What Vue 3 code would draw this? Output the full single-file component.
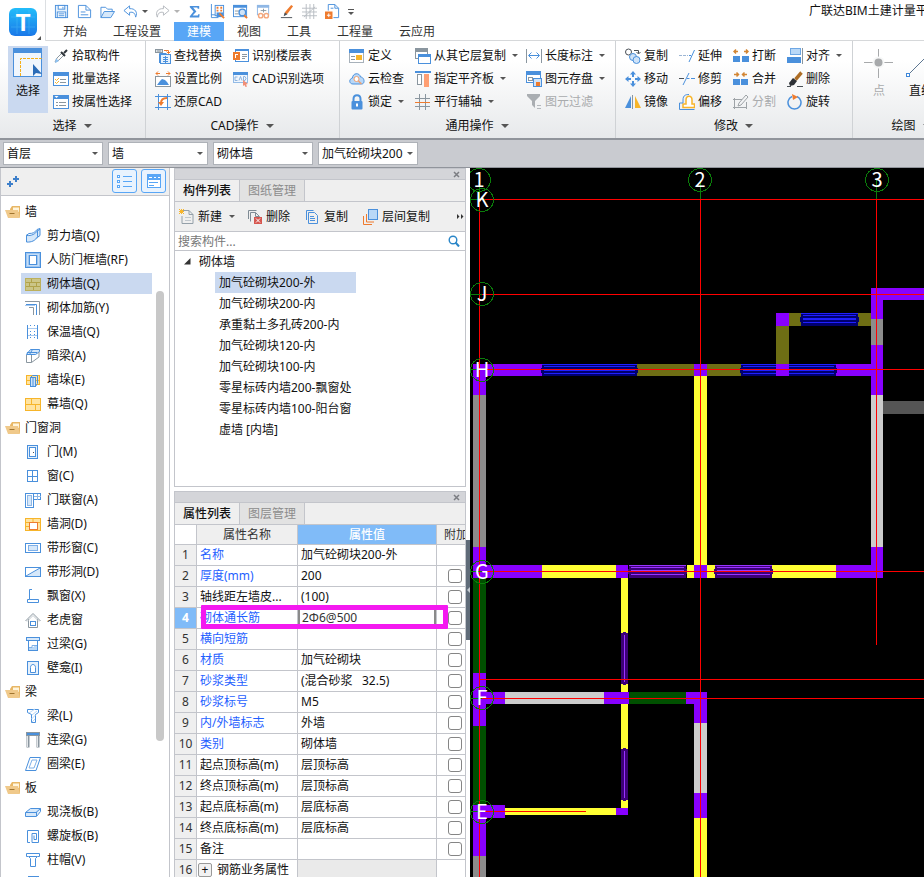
<script setup>
import { ref } from 'vue'

const B = '#4a90dc'
const L = '#d6e8fa'
const O = '#ee7b2e'
const G = '#8a969f'
const Y = '#f7b52a'
const YL = '#ffe3a0'
const K = '#4a5056'

const line = (d, c = B, w = 1) => `<path d="${d}" fill="none" stroke="${c}" stroke-width="${w}"/>`
const fill = (d, c = B) => `<path d="${d}" fill="${c}"/>`
const box = (x, y, w, h, f = 'none', s = B, sw = 1) =>
  `<rect x="${x}" y="${y}" width="${w}" height="${h}" fill="${f}" stroke="${s}" stroke-width="${sw}"/>`

const icons = {
  save: box(1.5, 1.5, 13, 13, '#e6f2fd') + box(4.5, 1.5, 7, 4, '#fff') + box(3.5, 8.5, 9, 6, '#fff') + line('M5 10.5h6M5 12.5h6M9.5 3v2'),
  file: line('M1.5 14.5V1.5h8l5 5v8z') + line('M9.5 1.5v5h5M4 8.5h5M4 11.5h8'),
  open: line('M1 14.500V3.500h5l2 2h5v2.500') + fill('M1 14.500L4.500 8h11l-4 6.500z', L) + line('M1 14.500L4.500 8h11l-4 6.500z'),
  undo: fill('M7 2L1 7l6 5V9c4-1 6 1 6.500 5C16 9 13 4.500 7 5z', '#fff') + line('M7 2L1 7l6 5V9c4-1 6 1 6.500 5C16 9 13 4.500 7 5z'),
  redo: line('M9 2l6 5-6 5V9C5 8 3 10 2.500 14 0 9 3 4.500 9 5z', '#b3b8bd'),
  sum: fill('M3 2h10v3h-1.500L11 3.700H6.500L10 8l-4 4.300h5.500L12 11h1.500l-.5 3.500H3V13l4-5-4-4.500z'),
  calc: line('M1.500 0v14.500H9M1 11.500h6') + box(5.5, 1.5, 9, 11, '#fff') + fill('M7 3h2v2H7zM11 3h2v2h-2zM7 6h2v2H7zM11 6h2v2h-2z', O) + fill('M7 9h7v5H7z') + line('M10 10l5 5', O, 2),
  find: box(.5, 1.5, 14, 12, '#fff') + fill('M0 1h15v3H0z') + line('M2 7.500h5M2 10.500h4', G) + `<circle cx="10" cy="9" r="3.500" fill="#cfe3f8" stroke="${B}" stroke-width="1.500"/>` + line('M12 12l3 3', O, 2),
  view: box(1.5, 1.5, 12, 10, '#fff', '#8fb7e5') + fill('M1 1h13v3H1z', '#8fb7e5') + line('M5 7h6M8 5v4', G) + `<circle cx="5" cy="12.500" r="2.300" fill="#fff" stroke="#f4a77c" stroke-width="1.500"/><circle cx="11" cy="12.500" r="2.300" fill="#fff" stroke="#f4a77c" stroke-width="1.500"/>`,
  brush: fill('M13 1l2 1.500-6 8-3 1 .5-3z', O) + fill('M6 9l3 2-4 2z', K) + line('M2 14.500h12', K),
  net: line('M4.500 0v16M8.500 0v16M12.500 0v16M0 4.500h16M0 8.500h16M0 12.500h16M2 14L14 3', '#b8bdc2'),
  addfile: line('M3.500 7V.5h7l4 4v10H9') + line('M10.500.5v4h4M6 4.500h3') + fill('M0 8h8v8H0z', O) + line('M2 12h4M4 10v4', '#fff'),
  dropper: line('M2 14l2-4 5-5 2 2-5 5-3 2z', '#8c979f') + fill('M3 10.500l3 2.500-4 2z', '#8dc3f5') + line('M8 4l4 4M11 5l3-3', '#30363c', 2),
  batch: box(.5, 1.5, 15, 13, '#fff') + fill('M0 1h16v4H0z') + line('M7 8.500h6M7 11.500h6', G) + line('M2 8l1.500 1.500L6 7M2 11l1.500 1.500L6 10', Y),
  prop: box(.5, 1.5, 15, 13, '#fff') + fill('M0 1h16v4H0z') + fill('M1.500 2h4l-2 2z', '#fff') + line('M6 8.500h7M6 11.500h7M3 8.500h2M3 11.500h2', G),
  replace: box(.5, 1.5, 7, 3, '#dde1e4', G) + line('M3 1v4M5 1v4', G) + line('M9 2.500h4.500v3M11.500 3.500l2 2 2-2', O) + box(5.5, 6.5, 10, 9, '#e6f2fd') + line('M4.500 15V5.500h7M8 9.500h5M8 11.500h5M8 13.500h5M10.500 8v7'),
  scale: line('M1 2.500h4M11 2.500h4M3 .5l-2 2 2 2M13 .5l2 2-2 2', O) + box(.5, 5.5, 15, 10, '#fff', G) + fill('M2 14l3-4 2-2 3 1 2 2 2 3z'),
  restore: line('M3.500 0v16M12.500 0v16M0 2.500h16M0 13.500h16') + fill('M4 3h8v10H4z', '#fff') + line('M6 9c0-3 2-5 6-5', O, 2) + fill('M3 8h6l-3 4z', O),
  floors: box(2.5, 1.5, 13, 12, '#fff') + fill('M2 1h14v2H2z') + line('M9 6.500h5M9 8.500h5M9 10.500h3', G) + box(1, 5, 5, 6, '#fff', O, 2) + fill('M3 7h2v3H3z', O),
  cadopt: box(.5, 1.5, 14, 10, '#f0f6fd', '#94bbe6') + fill('M0 1h15v3H0z') + line('M4.500 6H2v3.500h2.500M6 9.500l1.500-4L9 9.500M10.500 5.500v4h1.500l1-2-1-2z', '#8db3de') + fill('M10 9l5 4-2 .5 1 2-1.500.5-1-2-1.500 1z', '#f18f76'),
  define: box(.5, 1.5, 14, 13, '#fff', '#a7b1ba') + fill('M0 1h15v4H0z') + line('M2 8.500h4M2 11.500h4', G) + fill('M7 7h6v5H7z', Y),
  cloud: `<path d="M4 13c-4 0-4.500-5-.5-6 0-5 7-6 8-1 4 0 5 7 1 7z" fill="#b9d8f7" stroke="${B}"/><circle cx="7.500" cy="8" r="2.500" fill="#fff" stroke="#f0a070"/>` + line('M9.500 10l3 3', '#f0a070', 1.5),
  lock: `<path d="M4.500 7V5c0-5 7-5 7 0v2" fill="none" stroke="${B}" stroke-width="2"/><rect x="2.500" y="7" width="11" height="8.500" rx="1" fill="${B}"/>` + fill('M7 9.500h2v3H7z', '#fff'),
  layers: box(.5, .5, 12, 10, '#fff', G) + fill('M0 0h13v4H0z', G) + box(3.5, 6.5, 12, 9, '#fff') + fill('M3 6h13v3H3z'),
  flush: line('M0 1h16', B, 2) + box(2.5, 3.5, 4, 10, '#fff', G) + fill('M9 3h5v13H9z', '#ff9f73'),
  axis: line('M4.500 0v16M10.500 0v16', G) + line('M0 4.500h15', G) + line('M0 8.500h15', O) + line('M0 12.500h15', G),
  dim: line('M.5 1v14M15.500 1v14', G) + line('M3 7.500h10M5.500 4.500l-3 3 3 3M10.500 4.500l3 3-3 3'),
  store: box(.5, .5, 14, 11, '#fff') + fill('M0 0h15v4H0z') + box(2.5, 6.5, 4, 3, '#fff', G) + box(7.5, 7.5, 8, 8, '#cfe3f8') + fill('M10 11h4v4h-4z', O),
  filter: fill('M1 0h13v2L9 7v7l-3-3V7L1 2z', '#aaaeb2') + line('M11 11.500h4M11 14.500h4', '#b4b8bc'),
  copy: `<circle cx="3.500" cy="4" r="3" fill="#fff" stroke="${K}"/>` + line('M9 2.500h4.500v3M11.500 4l2 2 2-2', K) + `<circle cx="8" cy="9" r="3.500" fill="#cfe3f8" stroke="${B}"/><circle cx="11.500" cy="12" r="3.500" fill="#cfe3f8" stroke="${B}"/>`,
  move: fill('M8 0l3 3.500H5zM8 16l3-3.500H5zM0 8l3.500-3v6zM16 8l-3.500-3v6z') + line('M8 3v3M8 10v3M3 8h3M10 8h3', B, 2),
  mirror: fill('M6 2v12H0z') + fill('M10 2v12h6z', Y) + line('M7.500 1v14', G),
  extend: line('M0 7.500h9', '#9db6d4').replace('/>', ' stroke-dasharray="3 1"/>') + line('M10 14L15.500 2', B) + line('M10 7.500h2', B),
  trim: line('M4 14l6-12', B) + line('M0 7.500h5', K) + line('M8 7.500h8', B) + line('M10.500 7.500h1.500', '#fff'),
  offset: `<path d="M4 13.500V10h3V6c0-5 6-5 6 0v4h2.500v3.500z" fill="#fff" stroke="${Y}" stroke-width="1.500"/>` + line('M15.500 15.500H.5V9H4V6c0-5 3-5.500 6-5.500', B, 1),
  split: fill('M0 8h7v6H0zM9 8h7v6H9z') + line('M1 3.500h4M3 1.500l-2 2 2 2M11 3.500h4M13 1.500l2 2-2 2', '#d38634', 1.5),
  merge: fill('M0 8h7v6H0zM8 8h7v6H8z') + line('M1 3.500h4M3.500 1.500l2 2-2 2M10 3.500h4M11.500 1.500l-2 2 2 2', '#d38634', 1.5),
  cut: line('M0 5.500h9M0 13.500h14M1.500 4v11M13.500 8v7M5 12l1-3 7-8 2 2-7 8z', '#9ea3a7'),
  align: box(3.5, .5, 10, 6, '#b9d8f7', '#6ea7e4') + fill('M0 9h14v6H0z') + line('M15.500 0v16', G),
  erase: line('M8 8l6-7M9 9l6-7', '#ad6d25', 2) + fill('M6 7l4 3-3 4-4 1-1-3z', '#2c3035') + line('M0 15.500h4M10 15.500h6', K),
  rotate: `<path d="M10 2.500a6.500 6.500 0 1 1-5 0" fill="none" stroke="${B}" stroke-width="1.500"/>` + fill('M5 0l6 3-5 3z', O),
  folder: fill('M5 5l2-3h8v11H6z', '#e8b766') + fill('M8 3.500h6V8H8z', '#fff5dd') + fill('M0 6h13l2 8H3z', '#f0c98a') + line('M4.500 9.500h5', '#a0742f'),
  shear: fill('M1 7c5 1 9-1 11-5l3-1v7c-3 4-8 7-14 6z', L) + line('M1.500 7.500c5 .5 9-1.500 11-5v6c-2 4-6 6-11 5.500zM1 7.500l3-2c4 0 6-1 8-4l3-1v7l-3 2M12.500 3L15 1'),
  frame: box(.5, .5, 15, 15, '#9cc5f0', B) + box(2.5, 2.5, 11, 11, '#9cc5f0', '#c5ddf7') + box(4.5, 3.5, 7, 9, '#fff'),
  brick: box(.5, 2.5, 15, 12, '#cbc588', '#bcb05c') + line('M1 6.500h14M1 10.500h14M6.500 3v3M11.500 7v3M4.500 7v3M8.500 11v3', '#b0a24a'),
  rebar: line('M0 1.500h14.500V15', G) + line('M1 4.500h10.500V15', B) + line('M4 7.500h4.500V15', G) + line('M0 5.500h10', '#a8c9ee'),
  insul: line('M2.500 1v14M12.500 1v14') + line('M5.500 1v14M9.500 1v14', B).replace('/>', ' stroke-dasharray="1 2"/>') + line('M3 4.500h9M3 11.500h9', '#a9caef'),
  hidden: fill('M1 5l5-4h9v3l-4 3H1z', L) + line('M1.500 6.500l4-5h9v2l-4 3zM2 4.500h10M7.500 1.500l-3 5', B) + line('M1.500 7v7.500h5V7M6.500 14.500L14 9V4', G),
  pier: box(1.5, 3.5, 13, 9, YL, Y) + line('M1 8.500h14', Y) + box(5.5, 5.5, 5, 9, '#cfe3f8') + line('M5.500 5.500l2-2h5v8l-2 3M8 6v8'),
  curtain: box(.5, 2.5, 15, 12, YL, Y) + line('M0 8.500h16M6.500 3v5M10.500 9v5', Y, 1),
  door: box(2.5, 1.5, 10, 13, '#e6f1fc') + box(4.5, 3.5, 6, 9, '#fff') + line('M8 8.500h1', K),
  window: box(2.5, 2.5, 10, 11, '#fff') + line('M7.500 2v12M2 8.500h11'),
  doorwin: box(.5, 1.5, 8, 14, '#fff') + box(2.5, 3.5, 4, 10, L, '#8fb7e5') + box(8.5, 1.5, 7, 6, '#fff') + line('M12.500 2v6M9 4.500h7', '#8fb7e5'),
  hole: box(.5, 2.5, 15, 12, YL, Y) + line('M0 6.500h5M11 6.500h5M0 10.500h4M8 2v4', Y) + box(4.5, 6.5, 8, 7, '#fff', O),
  strip: box(.5, 3.5, 15, 9, '#fff') + box(3.5, 5.5, 9, 5, L, '#7fb0e8'),
  striphole: box(.5, 3.5, 15, 9, '#fff') + fill('M2 12L15 4v8z', L) + line('M1 12L15 4'),
  bay: line('M7 1.500H4.500v10H2.500v3h11v-3h-9'),
  dormer: line('M.5 9L8 1.500 15.500 9M3.500 7v8.500h9V7', G) + line('M2 9.500L8 3.500l6 6', '#c0c7cd') + box(5.5, 9.5, 5, 4, '#fff'),
  lintel: box(1.5, 1.5, 13, 3, L) + box(3.5, 4.5, 9, 10, '#fff') + fill('M4 14v-2h2v-1h3v-2h3v5z', '#b9d8f7') + line('M4 11.500h3v-2h5', '#7fb0e8'),
  niche: box(2.5, 1.5, 11, 13, '#e6f1fc') + `<path d="M5.500 12.500V7.500c0-4 5-4 5 0v5z" fill="#fff" stroke="${B}"/>`,
  beam: line('M2.500 1.500h11v3l-3 2v8h-4v-8l-4-2z') + line('M4 5l6-4M7 7l5-4M6.500 11l4-4M7 14l3-3', '#b9d8f7'),
  coupling: box(1.5, .5, 13, 3, B, G) + line('M3 3v12.500M13 3v12.500', G, 3) + line('M2.500 4v11M12.500 4v11', '#e3e6e9'),
  ring: line('M5 1.500h10.500L11 14.500H.5z') + line('M7 4h5l-3 8H4z', '#7fb0e8'),
  slab: fill('M1 8l5-4h9v3l-4 5H1z', L) + line('M.5 8.500l5-4h10v3l-4 5H.5zM.5 8.500h10.500l4.500-4M11.500 8v4'),
  spiral: line('M5 14.500H2.500v-12h11v12H7v-9h4.500v6H9v-4'),
  cap: line('M1.500 1.500h13v3h-2l-2 2v8h-5v-8l-2-2h-2zM4 4.500h8'),
  part: line('M4 .5h9v12H4z', B, 2),
  create: line('M4 1.500h6l4 4v9H3V7M10 1.500v4h4', '#94a0a9') + line('M6 8.500h6M6 11.500h6', '#c0c7cd') + line('M0 0l5 5M5 0L0 5M2.500 0v5M0 2.500h5', Y),
  remove: line('M1.500 10V1.500h8M3.500 12.500V3.500h5l4 4', '#7f8b94') + line('M8.500 3.500v4h4', '#7f8b94') + fill('M7 8h8v7H7z', '#d6564f') + line('M9 9.500l4 4M13 9.500l-4 4', '#fff'),
  dup: line('M1.500 11V1.500h7') + line('M3.500 14.500v-11h6l3 3v8zM5 7.500h4M5 9.500h5M5 11.500h5'),
  between: line('M.5 7v8.500H9', O) + line('M3.500 5v8H11', O) + box(5.5, .5, 9, 10, '#b9d8f7'),
  list: line('M6 3.500h9M6 8.500h9M6 13.500h9', '#58a6f6') + box(.5, 2.5, 2, 2, '#fff', '#58a6f6') + box(.5, 7.5, 2, 2, '#fff', '#58a6f6') + box(.5, 12.5, 2, 2, '#fff', '#58a6f6'),
  card: box(1.5, 1.5, 13, 13, '#fff', '#58a6f6') + fill('M1 1h14v6H1z', '#58a6f6') + line('M3 4.500h3M8 4.500h2M12 4.500h2', '#fff') + line('M3 9.500h9M3 12.500h5', '#58a6f6'),
  plus2: line('M0 11h6M3 8v6M6 6h6M9 3v6', '#3d7fca', 2),
}

const quick = [
  ['save'], ['file'], ['open'], ['undo', 'dark'], ['redo', 'pale'], ['sum'], ['calc'],
  ['find'], ['view'], ['brush'], ['net'], ['addfile'],
]

const tabs = ['开始', '工程设置', '建模', '视图', '工具', '工程量', '云应用']
const activeTab = ref('建模')

const t = (icon, label, opts = {}) => ({ icon, label, ...opts })
const groups = [
  { name: '选择', width: 146, big: [{ id: 'select', label: '选择', on: true }], cols: [
    [t('dropper', '拾取构件'), t('batch', '批量选择'), t('prop', '按属性选择')]] },
  { name: 'CAD操作', width: 194, cols: [
    [t('replace', '查找替换'), t('scale', '设置比例'), t('restore', '还原CAD')],
    [t('floors', '识别楼层表'), t('cadopt', 'CAD识别选项')]] },
  { name: '通用操作', width: 276, cols: [
    [t('define', '定义'), t('cloud', '云检查'), t('lock', '锁定', { menu: true })],
    [t('layers', '从其它层复制', { menu: true }), t('flush', '指定平齐板', { menu: true }), t('axis', '平行辅轴', { menu: true })],
    [t('dim', '长度标注', { menu: true }), t('store', '图元存盘', { menu: true }), t('filter', '图元过滤', { off: true })]] },
  { name: '修改', width: 237, cols: [
    [t('copy', '复制'), t('move', '移动'), t('mirror', '镜像')],
    [t('extend', '延伸'), t('trim', '修剪'), t('offset', '偏移')],
    [t('split', '打断'), t('merge', '合并'), t('cut', '分割', { off: true })],
    [t('align', '对齐', { menu: true }), t('erase', '删除'), t('rotate', '旋转')]] },
  { name: '绘图', width: 118, big: [{ id: 'point', label: '点', off: true }, { id: 'line', label: '直线' }], cols: [] },
]

const combos = [
  { name: '楼层', value: '首层' },
  { name: '构件大类', value: '墙' },
  { name: '构件类型', value: '砌体墙' },
  { name: '构件', value: '加气砼砌块200' },
]

const tree = [
  { name: '墙', items: [['shear', '剪力墙(Q)'], ['frame', '人防门框墙(RF)'], ['brick', '砌体墙(Q)'], ['rebar', '砌体加筋(Y)'], ['insul', '保温墙(Q)'], ['hidden', '暗梁(A)'], ['pier', '墙垛(E)'], ['curtain', '幕墙(Q)']] },
  { name: '门窗洞', items: [['door', '门(M)'], ['window', '窗(C)'], ['doorwin', '门联窗(A)'], ['hole', '墙洞(D)'], ['strip', '带形窗(C)'], ['striphole', '带形洞(D)'], ['bay', '飘窗(X)'], ['dormer', '老虎窗'], ['lintel', '过梁(G)'], ['niche', '壁龛(I)']] },
  { name: '梁', items: [['beam', '梁(L)'], ['coupling', '连梁(G)'], ['ring', '圈梁(E)']] },
  { name: '板', items: [['slab', '现浇板(B)'], ['spiral', '螺旋板(B)'], ['cap', '柱帽(V)']] },
]

const parts = ['加气砼砌块200-外', '加气砼砌块200-内', '承重黏土多孔砖200-内', '加气砼砌块120-内', '加气砼砌块100-内', '零星标砖内墙200-飘窗处', '零星标砖内墙100-阳台窗', '虚墙 [内墙]']
const activePart = ref(parts[0])

const props = [
  ['名称', '加气砼砌块200-外', 1], ['厚度(mm)', '200', 1], ['轴线距左墙皮...', '(100)', 0], ['砌体通长筋', '2Φ6@500', 1],
  ['横向短筋', '', 1], ['材质', '加气砼砌块', 1], ['砂浆类型', '(混合砂浆\u00a0\u00a0 32.5)', 1], ['砂浆标号', 'M5', 1],
  ['内/外墙标志', '外墙', 1], ['类别', '砌体墙', 1], ['起点顶标高(m)', '层顶标高', 0], ['终点顶标高(m)', '层顶标高', 0],
  ['起点底标高(m)', '层底标高', 0], ['终点底标高(m)', '层底标高', 0], ['备注', '', 0],
].map(([name, value, blue], i) => ({ no: i + 1, name, value, blue }))
const bars = ref('2Φ6@500')

// Plan drawing: wall pieces as [x, y, width, height, material]
const colors = { p: '#8800ff', y: '#ffff33', o: '#6e6e14', g: '#005000', c: '#cccccc', m: '#8c8c8c', d: '#555555' }
const walls = [
  [883, 401, 400, 13, 'd'],
  [473, 364, 13, 31, 'p'], [473, 395, 13, 152, 'm'], [473, 547, 13, 31, 'p'], [473, 578, 13, 95, 'g'],
  [473, 673, 13, 53, 'p'], [473, 726, 13, 79, 'g'], [473, 805, 13, 51, 'p'], [473, 856, 13, 400, 'm'],
  [486, 364, 56, 12, 'p'], [637, 364, 57, 12, 'o'], [694, 364, 13, 12, 'p'], [707, 364, 34, 12, 'o'], [836, 364, 35, 12, 'p'],
  [776, 313, 13, 13, 'p'], [789, 313, 12, 13, 'o'], [858, 313, 13, 13, 'o'], [776, 326, 13, 38, 'o'],
  [871, 288, 400, 12, 'p'], [871, 300, 12, 19, 'p'], [871, 319, 12, 26, 'm'], [871, 345, 12, 50, 'p'], [871, 395, 12, 152, 'c'], [871, 547, 12, 31, 'p'],
  [694, 376, 13, 189, 'y'],
  [486, 565, 56, 13, 'p'], [542, 565, 74, 13, 'y'], [616, 565, 12, 13, 'p'], [687, 565, 7, 13, 'y'], [694, 565, 13, 13, 'p'],
  [707, 565, 8, 13, 'y'], [772, 565, 64, 13, 'y'], [836, 565, 35, 13, 'p'],
  [621, 578, 7, 55, 'y'], [621, 684, 7, 8, 'y'], [621, 704, 7, 45, 'y'], [621, 800, 7, 8, 'y'],
  [486, 692, 19, 12, 'p'], [505, 692, 99, 12, 'c'], [604, 692, 25, 12, 'p'], [629, 692, 57, 12, 'g'], [686, 692, 21, 12, 'p'],
  [694, 704, 13, 19, 'p'], [694, 723, 13, 70, 'c'], [694, 793, 13, 25, 'p'], [694, 818, 13, 400, 'y'],
  [486, 805, 19, 13, 'p'], [505, 808, 111, 7, 'y'], [616, 808, 12, 7, 'p'],
]
const openings = [
  [801, 313, 57, 13, 'blue'], [542, 364, 95, 12, 'blue'], [741, 364, 95, 12, 'blue'],
  [629, 565, 57, 13, 'violet'], [715, 565, 57, 13, 'violet'],
]
const slots = [[621, 633, 7, 51], [621, 749, 7, 51]]
const axes = [
  [479, 199, 1, 900], [700, 199, 1, 900], [876, 199, 1, 446],
  [480, 199, 900, 1], [480, 294, 900, 1], [480, 369, 900, 1], [480, 571, 900, 1], [480, 679, 900, 1], [480, 698, 900, 1], [480, 811, 106, 1],
]
const stubs = [[479, 180, 1, 20], [700, 180, 1, 19], [876, 180, 1, 19], [470, 199, 15, 1], [470, 294, 12, 1], [470, 369, 12, 1], [470, 571, 12, 1], [470, 698, 12, 1], [470, 811, 15, 1]]
const marks = [['1', 479, 180], ['2', 700, 180], ['3', 877, 180], ['K', 482, 200], ['J', 482, 294], ['H', 482, 370], ['G', 482, 572], ['F', 482, 698], ['E', 482, 812]]
</script>

<template>
  <div class="app">
    <header class="top">
      <div class="logo">
        <svg width="34" height="34" viewBox="0 0 34 34" aria-hidden="true">
          <defs>
            <linearGradient id="lg" x1="0" y1="0" x2="0" y2="1">
              <stop offset="0" stop-color="#22bdfa" /><stop offset="1" stop-color="#1a78e8" />
            </linearGradient>
          </defs>
          <rect x="1" y="1" width="28" height="28" rx="6" fill="url(#lg)" />
          <path d="M3 10h24M3 20h24M9 3v24M21 3v24" stroke="#5cc8fb" stroke-width="1" opacity=".35" />
          <text x="15" y="24" text-anchor="middle" class="logo-t">T</text>
          <path d="M33 29v4h-4z" fill="#555" />
        </svg>
      </div>
      <div class="heads">
        <div class="quick">
          <template v-for="[ic, dd] in quick" :key="ic">
            <button class="qbtn" :aria-label="ic">
              <svg class="ic" viewBox="0 0 16 16" v-html="icons[ic]"></svg>
              <i v-if="dd" class="tri" :class="dd"></i>
            </button>
          </template>
          <button class="more" aria-label="more"><i class="tri"></i></button>
          <span class="title">广联达BIM土建计量平</span>
        </div>
        <nav class="tabs">
          <button v-for="tab in tabs" :key="tab" :class="{ on: tab === activeTab }" @click="activeTab = tab">{{ tab }}</button>
        </nav>
      </div>
    </header>

    <section class="ribbon">
      <div v-for="g in groups" :key="g.name" class="group" :style="{ flexBasis: g.width + 'px' }">
        <div class="tools">
          <div v-if="g.big" class="bigs">
            <button v-for="b in g.big" :key="b.id" class="big" :class="{ on: b.on, off: b.off }" :disabled="b.off">
              <svg v-if="b.id === 'select'" width="30" height="30" viewBox="0 0 30 30">
                <rect x=".5" y=".5" width="28" height="28" fill="#f0f6fd" stroke="#4a90dc" />
                <path d="M0 0h29v5H0z" fill="#4a90dc" />
                <path d="M7.500 28V10.500h21" fill="none" stroke="#f5b019" stroke-dasharray="3 1" />
                <path d="M20 16v12l3-3 6 1z" fill="#2b6cb8" />
              </svg>
              <svg v-else-if="b.id === 'point'" width="30" height="30" viewBox="0 0 30 30">
                <path d="M14.500 1v29M0 14.500h29" stroke="#a7a9ab" /><circle cx="14.500" cy="14.500" r="6" fill="#f7f8f8" /><circle cx="14.500" cy="14.500" r="4" fill="#a7a9ab" />
              </svg>
              <svg v-else width="30" height="30" viewBox="0 0 30 30">
                <path d="M3 26L26 3" stroke="#5d7691" /><rect x=".5" y="25.500" width="3" height="3" fill="#fff" stroke="#3f87d9" /><rect x="25.500" y="1.500" width="3" height="3" fill="#fff" stroke="#3f87d9" />
              </svg>
              <span>{{ b.label }}</span>
            </button>
          </div>
          <div v-for="(col, i) in g.cols" :key="i" class="col">
            <button v-for="x in col" :key="x.label" class="tool" :class="{ off: x.off }" :disabled="x.off">
              <svg class="ic" viewBox="0 0 16 16" v-html="icons[x.icon]"></svg>
              <span>{{ x.label }}</span>
              <i v-if="x.menu" class="tri"></i>
            </button>
          </div>
        </div>
        <button class="gname">{{ g.name }}<i class="tri wide"></i></button>
      </div>
    </section>

    <section class="combos">
      <label v-for="c in combos" :key="c.name" class="combo">
        <select :aria-label="c.name"><option>{{ c.value }}</option></select>
        <i class="tri"></i>
      </label>
    </section>

    <main class="work">
      <aside class="nav">
        <div class="navbar">
          <button class="plain" aria-label="expand"><svg class="ic" viewBox="0 0 16 16" v-html="icons.plus2"></svg></button>
          <button class="mode" aria-label="list"><svg class="ic" viewBox="0 0 16 16" v-html="icons.list"></svg></button>
          <button class="mode" aria-label="card"><svg class="ic" viewBox="0 0 16 16" v-html="icons.card"></svg></button>
        </div>
        <div class="treebox">
          <ul class="tree">
            <li v-for="s in tree" :key="s.name">
              <div class="folder"><svg class="ic" viewBox="0 0 16 16" v-html="icons.folder"></svg>{{ s.name }}</div>
              <ul>
                <li v-for="[ic, label] in s.items" :key="label" class="leaf">
                  <a href="#" :class="{ on: ic === 'brick' }"><svg class="ic" viewBox="0 0 16 16" v-html="icons[ic]"></svg>{{ label }}</a>
                </li>
              </ul>
            </li>
            <li class="leaf"><a href="#" aria-label="part"><svg class="ic" viewBox="0 0 16 16" v-html="icons.part"></svg></a></li>
          </ul>
          <div class="track"><div class="thumb"></div></div>
        </div>
      </aside>

      <div class="side">
        <section class="panel parts">
          <div class="cap"><button aria-label="close"><svg width="7" height="7" viewBox="0 0 7 7"><path d="M1 1l5 5M6 1L1 6" stroke="#7b7d82" stroke-width="1.500" /></svg></button></div>
          <div class="ptabs"><button class="on">构件列表</button><button>图纸管理</button></div>
          <div class="pbar">
            <button><svg class="ic" viewBox="0 0 16 16" v-html="icons.create"></svg>新建<i class="tri"></i></button>
            <button><svg class="ic" viewBox="0 0 16 16" v-html="icons.remove"></svg>删除</button>
            <button><svg class="ic" viewBox="0 0 16 16" v-html="icons.dup"></svg>复制</button>
            <button><svg class="ic" viewBox="0 0 16 16" v-html="icons.between"></svg>层间复制</button>
            <button class="next" aria-label="more"><svg width="8" height="7" viewBox="0 0 8 7"><path d="M0 1l2.500 2.500L0 6zM4 1l2.500 2.500L4 6z" fill="#333" /></svg></button>
          </div>
          <label class="search">
            <input type="text" placeholder="搜索构件..." aria-label="搜索构件" />
            <svg width="12" height="12" viewBox="0 0 12 12"><circle cx="5" cy="5" r="3.800" fill="none" stroke="#2a86c8" stroke-width="1.400" /><path d="M7.500 7.500l3.500 4" stroke="#2a86c8" stroke-width="2" /></svg>
          </label>
          <div class="plist">
            <div class="proot"><svg width="7" height="7" viewBox="0 0 7 7"><path d="M6.500 0v6.500H0z" fill="#333" /></svg>砌体墙</div>
            <ul><li v-for="p in parts" :key="p" :class="{ on: p === activePart }" @click="activePart = p">{{ p }}</li></ul>
          </div>
        </section>

        <section class="panel propsbox">
          <div class="cap"><button aria-label="close"><svg width="7" height="7" viewBox="0 0 7 7"><path d="M1 1l5 5M6 1L1 6" stroke="#7b7d82" stroke-width="1.500" /></svg></button></div>
          <div class="ptabs"><button class="on">属性列表</button><button>图层管理</button></div>
          <div class="tablebox">
            <table>
              <colgroup><col class="c1" /><col class="c2" /><col class="c3" /><col class="c4" /></colgroup>
              <thead><tr><th class="corner"></th><th>属性名称</th><th class="hot">属性值</th><th class="last">附加</th></tr></thead>
              <tbody>
                <tr v-for="r in props" :key="r.no">
                  <th :class="{ hot: r.no === 4 }">{{ r.no }}</th>
                  <td :class="{ blue: r.blue, framed: r.no === 4 }">{{ r.name }}</td>
                  <td v-if="r.no === 4" class="edit"><input v-model="bars" type="text" :aria-label="r.name" /></td>
                  <td v-else>{{ r.value }}</td>
                  <td class="ck"><input v-if="r.no > 1" type="checkbox" :aria-label="r.name + ' 附加'" /></td>
                </tr>
                <tr>
                  <th>16</th>
                  <td class="sub"><button aria-label="expand">+</button>钢筋业务属性</td>
                  <td class="grey"></td><td></td>
                </tr>
              </tbody>
            </table>
          </div>
        </section>
      </div>

      <div class="splitter"><button aria-label="collapse"><svg width="3" height="6" viewBox="0 0 3 6"><path d="M3 0v6L0 3z" fill="#c5cbd1" /></svg></button></div>

      <div class="canvas">
        <svg width="100%" height="100%" shape-rendering="crispEdges">
          <g transform="translate(-470 -168)">
            <rect v-for="(w, i) in walls" :key="'w' + i" :x="w[0]" :y="w[1]" :width="w[2]" :height="w[3]" :fill="colors[w[4]]" />
            <g v-for="(o, i) in openings" :key="'o' + i" :class="o[4]">
              <rect :x="o[0]" :y="o[1]" :width="o[2]" :height="o[3]" class="body" />
              <rect :x="o[0] - 1" :y="o[1] + 4" :width="o[2] + 2" height="5" class="body" />
              <rect :x="o[0]" :y="o[1]" :width="o[2]" height="1" class="ray edge" />
              <rect :x="o[0] + 2" :y="o[1] + 2" :width="o[2] - 4" height="1" class="ray" />
              <rect :x="o[0] + 2" :y="o[1] + 5" :width="o[2] - 4" height="2" class="ray" />
              <rect :x="o[0] + 2" :y="o[1] + 9" :width="o[2] - 4" height="1" class="ray" />
            </g>
            <rect x="776" y="364" width="13" height="12" fill="#8800ff" />
            <g v-for="(s, i) in slots" :key="'s' + i" class="violet">
              <rect :x="s[0]" :y="s[1]" :width="s[2]" :height="s[3]" class="body" />
              <rect :x="s[0] + 2" :y="s[1] - 1" width="3" :height="s[3] + 2" class="body" />
              <rect :x="s[0] + 3" :y="s[1] + 2" width="1" :height="s[3] - 4" class="ray" />
            </g>
            <rect v-for="(a, i) in axes" :key="'a' + i" :x="a[0]" :y="a[1]" :width="a[2]" :height="a[3]" fill="#f00" />
            <rect v-for="(a, i) in stubs" :key="'t' + i" :x="a[0]" :y="a[1]" :width="a[2]" :height="a[3]" fill="#0a7d0a" />
            <g v-for="m in marks" :key="m[0]">
              <circle :cx="m[1]" :cy="m[2]" r="11.500" fill="none" stroke="#0a7d0a" />
              <text :x="m[1]" :y="m[2] + 7" text-anchor="middle" class="mark">{{ m[0] }}</text>
            </g>
          </g>
        </svg>
      </div>
    </main>
  </div>
</template>

<style>
body { margin: 0; overflow: hidden; }
</style>

<style scoped>
.app { height: 100vh; display: flex; flex-direction: column; overflow: hidden; background: #fff; color: #111; font: 12px/16px "Noto Sans", "Noto Sans CJK SC", sans-serif; }
.app *, .app *::before, .app *::after { box-sizing: border-box; }
button, input, select { font: inherit; color: inherit; margin: 0; padding: 0; border: 0; background: none; white-space: nowrap; }
ul { list-style: none; margin: 0; padding: 0; }
a { color: inherit; text-decoration: none; }
svg { display: block; flex: none; }
.ic { width: 16px; height: 16px; }
.tri { flex: none; width: 0; height: 0; border: 3px solid transparent; border-top: 3px solid #555; border-bottom: 0; }
.tri.wide { border-width: 4px; border-bottom: 0; margin-left: 5px; }
.tri.pale { border-top-color: #b3b3b3; }

.top { display: flex; flex: none; height: 41px; }
.logo { flex: none; width: 46px; padding: 7px 0 0 8px; border-right: 1px solid #dcdfe2; }
.logo-t { font: bold 24px "Liberation Sans", sans-serif; fill: #fff; }
.heads { flex: 1; min-width: 0; border-bottom: 1px solid #d6d8da; }
.quick { display: flex; align-items: center; gap: 7px; height: 22px; padding-left: 8px; }
.qbtn { display: flex; align-items: center; gap: 3px; }
.qbtn .ic { width: 15px; height: 15px; margin-right: 1px; }
.more { padding: 2px 0 0; }
.more .tri { display: block; }
.more::before { content: ""; display: block; height: 1px; background: #555; margin-bottom: 2px; }
.title { margin-left: auto; width: 115px; overflow: hidden; white-space: nowrap; }
.tabs { display: flex; height: 18px; padding-left: 4px; }
.tabs button { padding: 0 13px; color: #333; height: 19px; }
.tabs .on { background: #58a6f6; color: #fff; }

.ribbon { display: flex; flex: none; height: 97px; overflow: hidden; background: linear-gradient(#fff 20%, #e7e9eb); }
.group { flex: none; display: flex; flex-direction: column; padding: 3px 0 0 9px; border-right: 1px solid #cfd2d5; }
.tools { display: flex; gap: 11px; height: 69px; }
.bigs { display: flex; gap: 2px; margin: 0 -6px 0 -1px; }
.big { width: 40px; height: 67px; margin-top: 2px; display: flex; flex-direction: column; align-items: center; gap: 5px; padding-top: 2px; }
.big.on { background: #cad9f0; }
.off { color: #a9abad; }
.group:last-child .bigs { margin-left: -3px; }
.col { display: flex; flex-direction: column; }
.tool { display: flex; align-items: center; gap: 3px; height: 23px; }
.tool .tri { margin: 0 -3px 0 3px; }
.gname { display: flex; align-items: center; justify-content: center; gap: 2px; height: 25px; padding-right: 10px; }

.combos { flex: none; display: flex; gap: 5px; height: 30px; padding: 2px 3px; background: #c9cbd0; border-top: 2px solid #90949b; border-bottom: 1px solid #90949b; }
.combo { display: flex; align-items: center; width: 100px; height: 23px; padding-right: 4px; background: #fff; border: 1px solid #aeb2b8; }
.combo select { appearance: none; flex: 1; min-width: 0; padding-left: 3px; outline: 0; }

.work { flex: 1; min-height: 0; display: flex; }
.nav { flex: none; width: 170px; display: flex; flex-direction: column; border: 1px solid #c3c5cb; border-width: 0 1px; }
.navbar { flex: none; display: flex; align-items: center; gap: 4px; height: 28px; padding: 0 3px 1px 6px; background: #efefef; border-bottom: 1px solid #c3c5cb; }
.plain { margin-right: auto; }
.mode { display: grid; place-items: center; width: 25px; height: 24px; border: 1px solid #58a6f6; border-radius: 3px; background: #e9f3fe; }
.treebox { flex: 1; min-height: 0; display: flex; overflow: hidden; padding-top: 4px; }
.tree { flex: none; width: 151px; }
.folder { display: flex; align-items: center; gap: 4px; height: 24px; padding-left: 4px; }
.leaf { height: 24px; padding: 1px 0 1px 20px; }
.leaf a { display: flex; align-items: center; gap: 6px; height: 21px; padding-left: 4px; white-space: nowrap; }
.leaf .on { background: #cad9f0; }
.track { display: flex; flex-direction: column; flex: none; width: 8px; margin-left: 4px; padding-top: 91px; }
.thumb { height: 450px; border-radius: 4px; background: #c8c8c8; }

.side { flex: none; width: 292px; margin-left: 4px; display: flex; flex-direction: column; gap: 4px; }
.panel { display: flex; flex-direction: column; min-height: 0; overflow: hidden; border: 1px solid #c3c5cb; }
.parts { flex: 0 0 45%; }
.propsbox { flex: 1; border-bottom: 0; }
.cap { flex: none; display: flex; justify-content: flex-end; align-items: center; height: 11px; padding-right: 5px; background: #d4d5d9; border-bottom: 1px solid #c3c5cb; }
.ptabs { flex: none; display: flex; height: 22px; background: #efefef; border-bottom: 1px solid #c3c5cb; }
.ptabs button { width: 65px; color: #8c8c8c; background: #e2e2e2; border-right: 1px solid #c3c5cb; }
.ptabs .on { color: #111; background: #efefef; font-weight: 500; }
.pbar { flex: none; display: flex; align-items: center; gap: 15px; height: 30px; padding: 0 0 0 4px; background: #efefef; border-bottom: 1px solid #c3c5cb; }
.pbar button { display: flex; align-items: center; gap: 3px; }
.pbar .tri { margin: 0 -3px 0 4px; }
.pbar .next { margin-left: auto; }
.search { flex: none; display: flex; align-items: center; height: 19px; padding: 0 5px 0 3px; border-bottom: 1px solid #c3c5cb; }
.search input { flex: 1; min-width: 0; height: 18px; outline: 0; }
.search input::placeholder { color: #777; opacity: 1; }
.proot { display: flex; align-items: center; gap: 8px; height: 21px; padding-left: 9px; }
.plist li { width: 141px; height: 21px; margin-left: 40px; padding-left: 4px; line-height: 22px; white-space: nowrap; }
.plist .on { background: #cad9f0; }

.tablebox { flex: 1; min-height: 0; overflow: hidden; }
table { width: 100%; table-layout: fixed; border-collapse: separate; border-spacing: 0; }
.c1 { width: 22px; }
.c2 { width: 101px; }
.c3 { width: 139px; }
th, td { height: 21px; padding: 0 3px; font-weight: 400; text-align: left; white-space: nowrap; line-height: 16px; border: 1px solid #c3c5cb; border-width: 0 1px 1px 0; }
th { background: #efefef; text-align: center; padding: 0; color: #333; }
thead th { height: 20px; }
thead .corner { background: #fff; }
thead .last { text-align: left; padding-left: 7px; border-right: 0; }
td:last-child { border-right: 0; }
.hot { background: #80bbf8; color: #fff; font-weight: 700; }
thead .hot { font-weight: 500; }
.blue { color: #1f5fff; }
.framed { position: relative; }
.framed::after { content: ""; position: absolute; z-index: 2; left: 4px; top: -3px; width: 247px; height: 24px; border: 5px solid #f41af0; border-radius: 1px; }
.edit { padding: 0; }
.edit input { display: block; width: 100%; height: 18px; padding: 0 2px 2px; border: 2px solid #8a8a8a; border-width: 0 2px; outline: 0; color: #333; }
.ck input { appearance: none; display: block; width: 14px; height: 14px; margin-left: 8px; border: 1px solid #858585; border-radius: 3px; background: #fff; }
.sub { padding-left: 1px; }
.sub button { width: 14px; height: 14px; margin-right: 5px; line-height: 12px; border: 1px solid #999; border-radius: 2px; background: #f2f2f2; }
.grey { background: #eaeaea; }

.splitter { flex: none; width: 4px; display: flex; flex-direction: column; }
.splitter::before { content: ""; flex: 372; }
.splitter::after { content: ""; flex: 237; }
.splitter button { display: grid; place-items: center; width: 4px; height: 100px; background: #5f6b78; }
.canvas { flex: 1; min-width: 0; background: #000; overflow: hidden; }
.mark { font: 20px "Noto Sans CJK SC", sans-serif; fill: #fff; }
.blue .body { fill: #00006e; }
.blue .ray { fill: #1f1fff; }
.violet .body { fill: #3c0078; }
.violet .ray { fill: #9a33ff; }
</style>
